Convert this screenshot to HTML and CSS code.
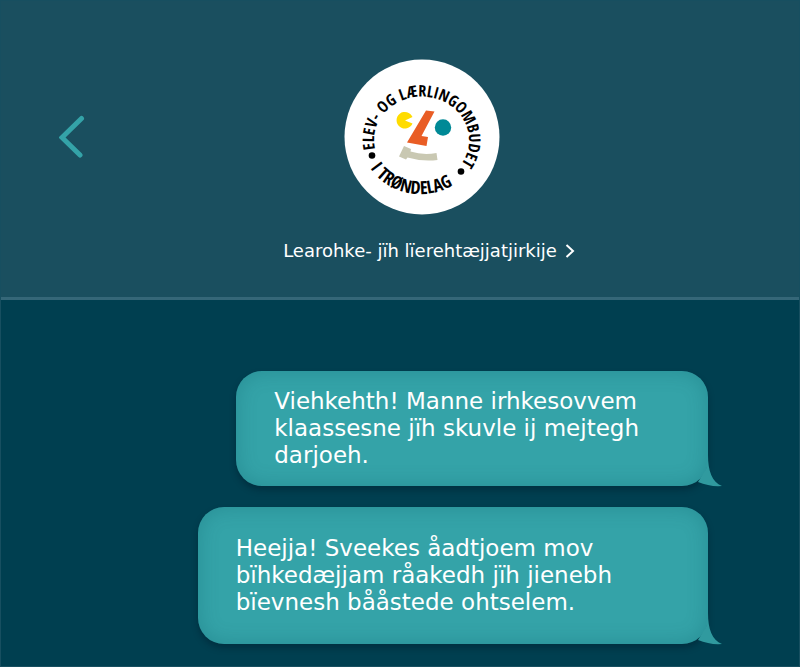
FILE: index.html
```
<!DOCTYPE html>
<html lang="sma">
<head>
    <meta charset="UTF-8">
    <meta name="viewport" content="width=device-width, initial-scale=1.0">
    <title>Learohke- jïh lïerehtæjjatjirkije</title>
    <link rel="stylesheet" href="styles.css">
</head>
<body>
    <div class="chat">
        <header class="chat-header">
            <button class="back-btn" type="button" aria-label="Back">
                <svg viewBox="0 0 26 44" width="26" height="44">
                    <path d="M22.500 3.500L3 22.500L21 40"/>
                </svg>
            </button>
            <div class="contact">
                <svg class="logo" viewBox="0 0 156 156" role="img" aria-label="Elev- og lærlingombudet i Trøndelag">
                    <defs>
                        <path id="arcTop" d="M31 90A47.500 43.500 0 1 1 114 109"/>
                        <path id="arcBottom" d="M26 109A60 56 0 0 0 121 117"/>
                    </defs>
                    <circle cx="78" cy="78" r="77.500" fill="#fff"/>
                    <text class="logo-text"><textPath href="#arcTop">ELEV- OG LÆRLINGOMBUDET</textPath></text>
                    <text class="logo-text logo-text-bottom"><textPath href="#arcBottom">I TRØNDELAG</textPath></text>
                    <circle cx="28" cy="96.500" r="3.300"/>
                    <circle cx="117" cy="112.500" r="3.300"/>
                    <path fill="#ffdc00" d="M61 61.500L68.500 64.500A8.300 8.300 0 1 1 68.500 58Z"/>
                    <path fill="#e95d25" d="M82 51.500L90.500 52.500L77.500 77L84 78L82.500 87L63 83.500Z"/>
                    <circle cx="99" cy="68.500" r="8.200" fill="#008996"/>
                    <path fill="#c9c8b2" d="M60 87L67 90L66.500 92.500Q79 96.500 92.500 94L93.500 101Q79 103 63.500 98.500L62 100.500L55 97.500Z"/>
                </svg>
                <a class="contact-link" href="#">
                    Learohke- jïh lïerehtæjjatjirkije
                    <svg viewBox="0 0 10 14" width="10" height="14">
                        <path d="M1.500 1L8 7L1.500 13"/>
                    </svg>
                </a>
            </div>
        </header>

        <main class="messages">
            <div class="bubble">
                <p>Viehkehth! Manne irhkesovvem<br>klaassesne jïh skuvle ij mejtegh<br>darjoeh.</p>
                <svg class="tail" viewBox="0 0 38 32" width="38" height="32">
                    <path d="M24 0C24 16 28 27 38 31Q26 32 14 27L22 14Z"/>
                </svg>
            </div>
            <div class="bubble bubble-large">
                <p>Heejja! Sveekes åadtjoem mov<br>bïhkedæjjam råakedh jïh jienebh<br>bïevnesh bååstede ohtselem.</p>
                <svg class="tail" viewBox="0 0 38 32" width="38" height="32">
                    <path d="M24 0C24 16 28 27 38 31Q26 32 14 27L22 14Z"/>
                </svg>
            </div>
        </main>
    </div>
</body>
</html>
```
FILE: styles.css
```
* {
    margin: 0;
    padding: 0;
    box-sizing: border-box;
}

body {
    font-family: Verdana, "DejaVu Sans", sans-serif;
    background: #003f50;
    color: white;
}

.chat {
    min-height: 100vh;
    border: 1px solid #174f60;
}

.chat-header {
    display: grid;
    grid-template-columns: 1fr auto 1fr;
    padding: 58px 0 34px 58px;
    background: #1a4f5f;
    border-bottom: 3px solid #356778;
}

.back-btn {
    justify-self: start;
    align-self: start;
    margin-top: 56px;
    background: none;
    border: none;
    cursor: pointer;
}

.back-btn svg {
    display: block;
    fill: none;
    stroke: #34a3a8;
    stroke-width: 5;
    stroke-linecap: round;
}

.contact {
    display: flex;
    flex-direction: column;
    align-items: center;
    gap: 24px;
}

.logo {
    width: 156px;
    height: 156px;
    margin-right: 14px;
}

.logo-text {
    font-family: "Liberation Sans Narrow", "Open Sans Condensed", "DejaVu Sans Condensed", sans-serif;
    font-size: 16px;
    font-weight: bold;
}

.logo-text-bottom {
    font-size: 18px;
}

.contact-link {
    display: flex;
    align-items: center;
    gap: 8px;
    color: white;
    font-size: 18px;
    line-height: 24px;
    text-decoration: none;
    white-space: nowrap;
}

.contact-link svg {
    fill: none;
    stroke: white;
    stroke-width: 2;
}

.messages {
    display: flex;
    flex-direction: column;
    align-items: flex-end;
    gap: 21px;
    padding: 71px 91px 22px 32px;
}

.bubble {
    position: relative;
    padding: 17px 69px 17px 38px;
    background: #34a3a8;
    border-radius: 26px;
    box-shadow: inset 0 0 20px rgba(0, 80, 90, 0.25), 0 4px 6px rgba(0, 20, 35, 0.35);
    font-size: 23px;
    line-height: 27px;
}

.bubble-large {
    padding-top: 28px;
    padding-bottom: 28px;
    padding-right: 96px;
}

.tail {
    position: absolute;
    right: -14px;
    bottom: -1px;
    fill: #309a9f;
}
```
